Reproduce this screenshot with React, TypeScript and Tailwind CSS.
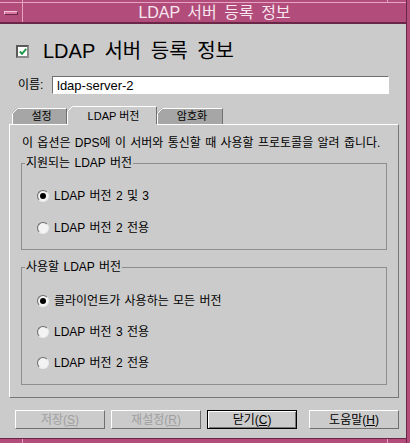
import { useState } from "react"

const font = "font-['Liberation_Sans','Noto_Sans_CJK_KR',sans-serif]"

function Radio({ checked, label, onClick }: { checked: boolean; label: string; onClick: () => void }) {
  return (
    <div className="flex h-[16px] items-center gap-[5px] cursor-default select-none" onClick={onClick}>
      <span className="flex h-[12px] w-[12px] items-center justify-center rounded-full border border-t-[#6a6a6a] border-l-[#6a6a6a] border-b-[#ececec] border-r-[#ececec] bg-[#f3f3f3]">
        {checked && <span className="h-[6px] w-[6px] rounded-full bg-black" />}
      </span>
      <span className="text-[12px] leading-[16px] text-black [word-spacing:1px]">{label}</span>
    </div>
  )
}

function Tab({ label, active, width }: { label: string; active?: boolean; width: number }) {
  const h = active ? 19 : 16
  return (
    <div
      className={active ? "relative z-10 -mb-[1px] flex h-[19px] items-center justify-center pl-[3px] pt-[1px] text-[11px]" : "relative flex h-[16px] items-center justify-center pl-[4px] text-[11px]"}
      style={{ width }}
    >
      <svg className="absolute inset-0" width={width} height={h}>
        <polygon points={`0,${h} 0,5 5,0 ${width},0 ${width},${h}`} fill={active ? "#cbcbcb" : "#a6a6a6"} />
        <path d={`M0.5,${h} V5.5 L5.5,0.5 H${width - 1}`} stroke="#ffffff" fill="none" />
        <path d={`M${width - 0.5},1 V${active ? h - 1 : h}`} stroke="#6f6f6f" fill="none" />
      </svg>
      <span className="relative text-black">{label}</span>
    </div>
  )
}

function Btn({ children, disabled, isDefault, extra }: { children: React.ReactNode; disabled?: boolean; isDefault?: boolean; extra?: boolean }) {
  return (
    <button
      className={
        (extra ? "ml-[6px] " : "") +
        (isDefault
          ? "h-[19px] w-[90px] border border-black bg-[#cbcbcb] text-[12px] leading-none text-black shadow-[inset_1px_1px_0_#ffffff,inset_-1px_-1px_0_#777777]"
          : disabled
          ? "h-[19px] w-[90px] border border-t-white border-l-white border-r-[#6f6f6f] border-b-[#6f6f6f] bg-[#cbcbcb] text-[12px] leading-none text-[#a0a0a0]"
          : "h-[19px] w-[90px] border border-t-white border-l-white border-r-[#6f6f6f] border-b-[#6f6f6f] bg-[#cbcbcb] text-[12px] leading-none text-black")
      }
    >
      {children}
    </button>
  )
}

export default function App() {
  const [enabled, setEnabled] = useState<boolean>(true)
  const [supported, setSupported] = useState<number>(0)
  const [used, setUsed] = useState<number>(0)

  return (
    <div className={`flex h-[443px] w-[410px] overflow-hidden bg-[#cbcbcb] ${font}`}>
      <div className="flex w-[406px] flex-col">
        {/* title bar */}
        <div className="flex h-[2px] bg-[#b24c7a]">
          <div className="w-[23px] border-r border-[#e6a3c2]" />
          <div className="w-[365px] border-r border-[#e6a3c2]" />
          <div className="flex-1" />
        </div>
        <div className="flex h-[22px] border-t border-b-2 border-t-[#e6a3c2] border-b-[#6a2646] bg-[#b24c7a]">
          <div className="flex w-[23px] items-center border-r border-[#e6a3c2] pl-[4px]">
            <span className="h-[4px] w-[14px] border border-t-[#f4c2da] border-l-[#f4c2da] border-b-[#6a2646] border-r-[#6a2646] bg-[#d9779f]" />
          </div>
          <div className="flex flex-1 items-center justify-center text-[16px] leading-none text-[#f7e6ef] [word-spacing:3px]">
            LDAP 서버 등록 정보
          </div>
        </div>

        {/* heading */}
        <div className="mt-[15px] flex h-[24px] items-center pl-[16px]">
          <span
            className="flex h-[13px] w-[13px] items-center justify-center border-2 border-t-[#5a5a5a] border-l-[#5a5a5a] border-b-[#8a8a8a] border-r-[#8a8a8a] bg-white"
            onClick={() => setEnabled(!enabled)}
          >
            {enabled && (
              <svg width="8" height="7" viewBox="0 0 8 7">
                <path d="M0.8,3.5 L3,5.8 L7.3,0.8" stroke="#1f9a4c" strokeWidth="2" fill="none" />
              </svg>
            )}
          </span>
          <span className="ml-[14px] text-[20px] leading-none text-black [word-spacing:4px]">LDAP 서버 등록 정보</span>
        </div>

        {/* name */}
        <div className="mt-[13px] flex h-[18px] items-center pl-[18px]">
          <span className="w-[34px] text-[12px] text-black">이름:</span>
          <input
            className="h-[18px] w-[337px] border border-t-[#6f6f6f] border-l-[#6f6f6f] border-b-white border-r-white bg-white pl-[4px] text-[13px] leading-none text-black outline-none"
            defaultValue="ldap-server-2"
          />
        </div>

        {/* tabs */}
        <div className="ml-[12px] mt-[12px] flex h-[18px] items-end">
          <Tab label="설정" width={55} />
          <Tab label="LDAP 버전" active width={90} />
          <Tab label="암호화" width={66} />
        </div>

        {/* panel */}
        <div className="relative ml-[9px] w-[390px] border border-t-white border-l-white border-r-[#777777] border-b-[#777777] px-[11px] pb-[12px]">
          <p className="mt-[12px] pl-[1px] text-[12px] leading-[13px] text-black [word-spacing:1px]">
            이 옵션은 DPS에 이 서버와 통신할 때 사용할 프로토콜을 알려 줍니다.
          </p>

          <fieldset className="mt-[7px] border border-[#8e8e8e]">
            <legend className="ml-[3px] px-[1px] text-[12px] leading-[13px] text-black [word-spacing:1px]">지원되는 LDAP 버전</legend>
            <div className="flex flex-col gap-[16px] pb-[13px] pl-[15px] pt-[18px]">
              <Radio checked={supported === 0} label="LDAP 버전 2 및 3" onClick={() => setSupported(0)} />
              <Radio checked={supported === 1} label="LDAP 버전 2 전용" onClick={() => setSupported(1)} />
            </div>
          </fieldset>

          <fieldset className="mt-[11px] border border-[#8e8e8e]">
            <legend className="ml-[3px] px-[1px] text-[12px] leading-[13px] text-black [word-spacing:1px]">사용할 LDAP 버전</legend>
            <div className="flex flex-col gap-[15px] pb-[13px] pl-[15px] pt-[19px]">
              <Radio checked={used === 0} label="클라이언트가 사용하는 모든 버전" onClick={() => setUsed(0)} />
              <Radio checked={used === 1} label="LDAP 버전 3 전용" onClick={() => setUsed(1)} />
              <Radio checked={used === 2} label="LDAP 버전 2 전용" onClick={() => setUsed(2)} />
            </div>
          </fieldset>
        </div>

        {/* buttons */}
        <div className="mt-[12px] flex items-start gap-[6px] pl-[15px]">
          <Btn disabled>
            저장(<span className="underline">S</span>)
          </Btn>
          <Btn disabled>
            재설정(<span className="underline">R</span>)
          </Btn>
          <Btn isDefault>
            닫기(<span className="underline">C</span>)
          </Btn>
          <Btn extra>
            도움말(<span className="underline">H</span>)
          </Btn>
        </div>

        <div className="flex-1" />

        {/* bottom frame */}
        <div className="flex h-[5px] border-t border-[#6a2646] bg-[#b24c7a]">
          <div className="w-[23px] border-r border-[#e6a3c2]" />
          <div className="w-[365px] border-r border-[#e6a3c2]" />
        </div>
      </div>

      {/* right frame */}
      <div className="w-[4px] border-l border-[#6a2646] bg-[#b24c7a]" />
    </div>
  )
}
